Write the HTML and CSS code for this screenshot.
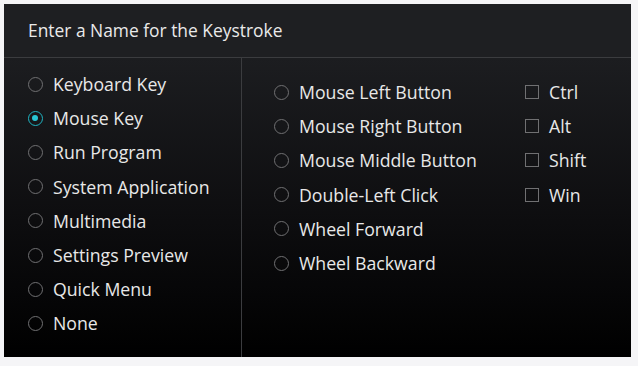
FILE: index.html
```html
<!DOCTYPE html>
<html>
<head>
<meta charset="utf-8">
<link rel="stylesheet" href="styles.css">
</head>
<body>
<div class="panel">
  <div class="header">Enter a Name for the Keystroke</div>
  <div class="content">
    <div class="left">
      <div class="row"><span class="radio"></span>Keyboard Key</div>
      <div class="row"><span class="radio on"></span>Mouse Key</div>
      <div class="row"><span class="radio"></span>Run Program</div>
      <div class="row"><span class="radio"></span>System Application</div>
      <div class="row"><span class="radio"></span>Multimedia</div>
      <div class="row"><span class="radio"></span>Settings Preview</div>
      <div class="row"><span class="radio"></span>Quick Menu</div>
      <div class="row"><span class="radio"></span>None</div>
    </div>
    <div class="right">
      <div class="mouse">
        <div class="row"><span class="radio"></span>Mouse Left Button</div>
        <div class="row"><span class="radio"></span>Mouse Right Button</div>
        <div class="row"><span class="radio"></span>Mouse Middle Button</div>
        <div class="row"><span class="radio"></span>Double-Left Click</div>
        <div class="row"><span class="radio"></span>Wheel Forward</div>
        <div class="row"><span class="radio"></span>Wheel Backward</div>
      </div>
      <div class="mods">
        <div class="row"><span class="check"></span>Ctrl</div>
        <div class="row"><span class="check"></span>Alt</div>
        <div class="row"><span class="check"></span>Shift</div>
        <div class="row"><span class="check"></span>Win</div>
      </div>
    </div>
  </div>
</div>
</body>
</html>
```
FILE: styles.css
```css
html, body {
  margin: 0;
  padding: 0;
  background: #f5f5f7;
}
body {
  padding: 4px 7px 9px 4px;
  font-family: "Open Sans", "Noto Sans", sans-serif;
  color: #e8e8e8;
}
.panel {
  width: 627px;
  height: 353px;
  display: flex;
  flex-direction: column;
  background: #000;
}
.header {
  height: 54px;
  box-sizing: border-box;
  padding: 0 0 1px 24px;
  display: flex;
  align-items: center;
  font-size: 17.4px;
  background: #1e1f22;
  border-bottom: 1px solid #3b3c3f;
  color: #eaeaea;
}
.content {
  flex: 1;
  display: flex;
  background: linear-gradient(180deg, #1c1d20 0%, #0d0d0f 55%, #000 100%);
}
.left {
  width: 238px;
  box-sizing: border-box;
  border-right: 1px solid #3b3c3f;
  padding: 9px 0 0 24px;
}
.right {
  flex: 1;
  display: flex;
  padding: 17px 0 0 32px;
}
.mouse {
  width: 251px;
}
.row {
  height: 34.2px;
  display: flex;
  align-items: center;
  font-size: 17.7px;
  white-space: nowrap;
}
.radio {
  width: 15px;
  height: 15px;
  box-sizing: border-box;
  border: 1.5px solid #707072;
  border-radius: 50%;
  margin-right: 10px;
  flex: none;
  position: relative;
}
.radio.on {
  border-color: #1fb4c3;
}
.radio.on::after {
  content: "";
  position: absolute;
  left: 3px;
  top: 3px;
  width: 6px;
  height: 6px;
  border-radius: 50%;
  background: #28c6d4;
}
.check {
  width: 14px;
  height: 14px;
  box-sizing: border-box;
  border: 1.5px solid #707072;
  margin-right: 10px;
  flex: none;
}
```
